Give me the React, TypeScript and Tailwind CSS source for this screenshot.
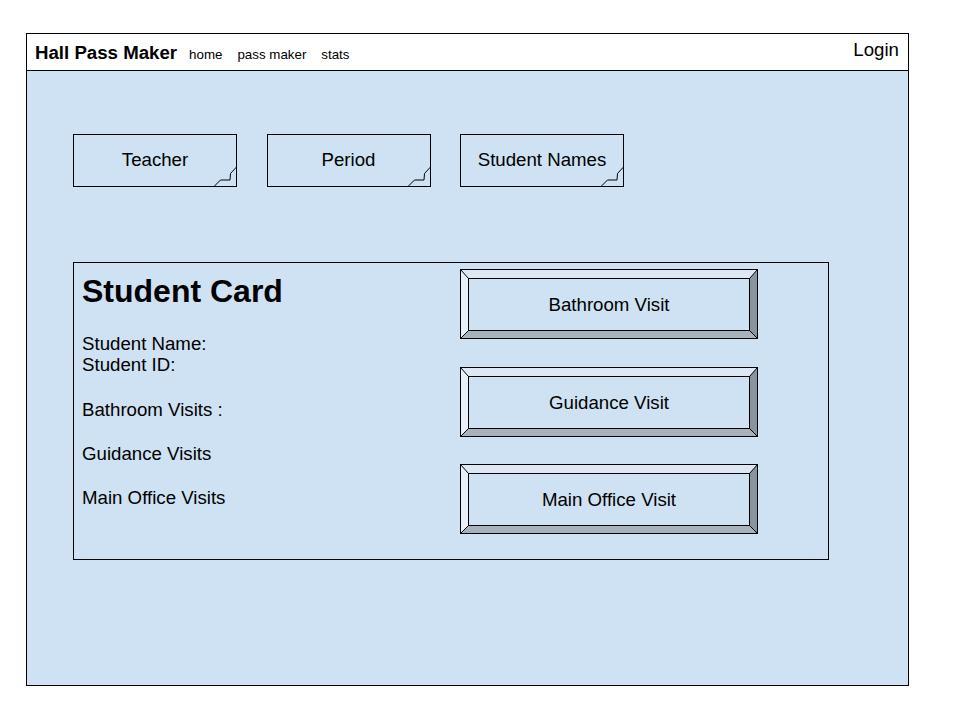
const NoteBox = ({ label }: { label: string }) => {
  return (
    <div className="relative w-[164px] h-[53px] border border-black flex items-center justify-center pb-[1px]">
      <span className="text-[18.67px] leading-none">{label}</span>
      <svg className="absolute right-0 bottom-0 w-[24px] h-[20px] overflow-visible" viewBox="0 0 24 20" fill="none">
        <polyline points="1.5,21 8.5,14 18,14 18.5,7.5 24.5,1" stroke="#000" strokeWidth="1" />
      </svg>
    </div>
  );
};

const BevelButton = ({ label }: { label: string }) => {
  return (
    <div className="relative w-[298px] h-[70px] flex items-center justify-center pt-[3px]">
      <svg className="absolute inset-0" width="298" height="70" viewBox="0 0 298 70">
        <polygon points="0,0 298,0 290,9 8,9" fill="#dde8f4" />
        <polygon points="0,0 8,9 8,62 0,70" fill="#e8f0f9" />
        <polygon points="298,0 298,70 290,62 290,9" fill="#8a949f" />
        <polygon points="0,70 8,62 290,62 298,70" fill="#a7b1bc" />
        <rect x="0.5" y="0.5" width="297" height="69" fill="none" stroke="#000" />
        <rect x="8.5" y="9.5" width="281" height="52" fill="none" stroke="#000" />
        <line x1="0.5" y1="0.5" x2="8.5" y2="9.5" stroke="#000" />
        <line x1="297.5" y1="0.5" x2="289.5" y2="9.5" stroke="#000" />
        <line x1="0.5" y1="69.5" x2="8.5" y2="61.5" stroke="#000" />
        <line x1="297.5" y1="69.5" x2="289.5" y2="61.5" stroke="#000" />
      </svg>
      <span className="relative text-[18.67px] leading-none">{label}</span>
    </div>
  );
};

export default function App() {
  return (
    <div className="w-[960px] h-[720px] bg-white pt-[33px] pl-[26px] text-black font-['Liberation_Sans',Arial,sans-serif]">
      <div className="w-[883px] h-[653px] border border-black flex flex-col">
        <header className="h-[37px] shrink-0 bg-white border-b border-black flex justify-between">
          <div className="flex items-baseline pl-[8px] pt-[10px]">
            <span className="text-[18.67px] font-bold leading-none">Hall Pass Maker</span>
            <nav className="flex items-baseline gap-[15px] ml-[12px] text-[13.33px] leading-none">
              <span>home</span>
              <span>pass maker</span>
              <span>stats</span>
            </nav>
          </div>
          <div className="pr-[9px] pt-[7px] text-[18.67px] leading-none">Login</div>
        </header>

        <main className="flex-1 bg-[#cfe2f3] pl-[46px] pt-[63px]">
          <div className="flex gap-[29.5px]">
            <NoteBox label="Teacher" />
            <NoteBox label="Period" />
            <NoteBox label="Student Names" />
          </div>

          <section className="mt-[75px] w-[756px] h-[298px] border border-black flex">
            <div className="w-[386px] pl-[8px] pt-[12px]">
              <h1 className="text-[32px] font-bold leading-none">Student Card</h1>
              <div className="mt-[25.5px] text-[18.67px] leading-[21.6px]">
                <div>Student Name:</div>
                <div>Student ID:</div>
                <div className="mt-[23px]">Bathroom Visits :</div>
                <div className="mt-[22.5px]">Guidance Visits</div>
                <div className="mt-[22.5px]">Main Office Visits</div>
              </div>
            </div>
            <div className="flex flex-col gap-[27.5px] pt-[6px]">
              <BevelButton label="Bathroom Visit" />
              <BevelButton label="Guidance Visit" />
              <BevelButton label="Main Office Visit" />
            </div>
          </section>
        </main>
      </div>
    </div>
  );
}
